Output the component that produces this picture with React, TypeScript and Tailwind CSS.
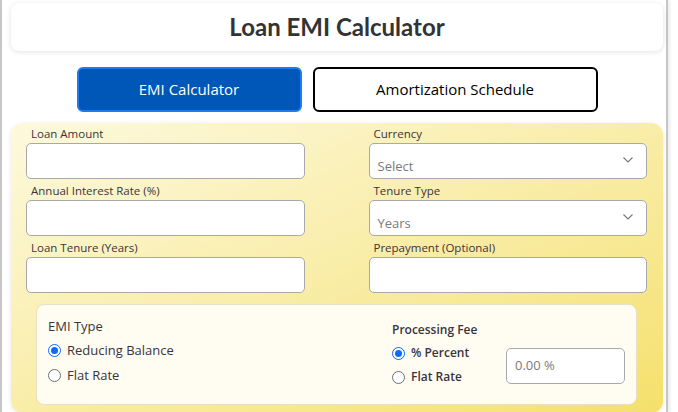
import React, { useState } from 'react';

const body = { fontFamily: '"Open Sans", "Noto Sans", Arial, sans-serif' };

function Field({ label, select, placeholder }: { label: string; select?: boolean; placeholder?: string }) {
  return (
    <div className="flex flex-col">
      <label className="pl-[5px] text-[11.5px] leading-[14px] text-[#3a3340] mb-[2px]">{label}</label>
      {select ? (
        <div className="relative h-[36px] rounded-[5px] border border-[#a9a9a9] bg-white">
          <span className="absolute left-[8px] top-[14px] text-[13px] leading-[16px] text-[#7a7a7a]">{placeholder}</span>
          <svg className="absolute right-[12px] top-[12px]" width="12" height="8" viewBox="0 0 12 8" fill="none">
            <path d="M1.5 1.5 L6 6 L10.5 1.5" stroke="#777" strokeWidth="1.1" />
          </svg>
        </div>
      ) : (
        <input className="h-[36px] rounded-[5px] border border-[#a9a9a9] bg-white px-2 outline-none" />
      )}
    </div>
  );
}

function Radio({ checked, label, bold }: { checked?: boolean; label: string; bold?: boolean }) {
  return (
    <div className="flex items-center gap-[6px] whitespace-nowrap">
      {checked ? (
        <span className="flex h-[13px] w-[13px] items-center justify-center rounded-full border-[1.5px] border-[#0b6cf5] bg-white">
          <span className="h-[7px] w-[7px] rounded-full bg-[#0b6cf5]" />
        </span>
      ) : (
        <span className="h-[13px] w-[13px] rounded-full border border-[#6f6f6f] bg-white" />
      )}
      <span className={bold ? 'text-[12px] font-semibold text-[#3a3340]' : 'text-[13px] text-[#3a3340]'}>{label}</span>
    </div>
  );
}

export default function App() {
  const [tab, setTab] = useState('emi');

  return (
    <div className="h-[412px] w-[678px] overflow-hidden bg-white" style={body}>
      <div className="h-full w-[668px] border-x-2 border-[#c6c6c6] shadow-[2px_0_3px_rgba(0,0,0,0.08)]">
        <div className="ml-[9px] mr-[3px] pt-[3px]">
          <div className="flex h-[48px] items-center justify-center rounded-[8px] bg-white shadow-[0_1px_5px_rgba(0,0,0,0.12)]">
            <h1 className="text-[24px] font-bold text-[#333]" style={{ fontFamily: 'Lato, sans-serif' }}>
              Loan EMI Calculator
            </h1>
          </div>

          <div className="mt-[16px] flex justify-center gap-[11px]">
            <button
              onClick={() => setTab('emi')}
              className="h-[45px] w-[225px] rounded-[6px] border-2 border-[#1f7cf0] bg-[#0057b7] text-[15px] text-white"
            >
              EMI Calculator
            </button>
            <button
              onClick={() => setTab('amort')}
              className="h-[45px] w-[285px] rounded-[6px] border-2 border-black bg-white text-[15px] text-black"
            >
              Amortization Schedule
            </button>
          </div>

          <div className="mt-[11px] rounded-[12px] bg-gradient-to-br from-[#fdf9dd] to-[#f5e06a] pl-[15px] pr-[16px] pt-[4px] pb-[8px] shadow-[0_1px_4px_rgba(0,0,0,0.1)]">
            <div className="grid grid-cols-2 gap-x-[64px] gap-y-[5px]">
              <Field label="Loan Amount" />
              <Field label="Currency" select placeholder="Select" />
              <Field label="Annual Interest Rate (%)" />
              <Field label="Tenure Type" select placeholder="Years" />
              <Field label="Loan Tenure (Years)" />
              <Field label="Prepayment (Optional)" />
            </div>

            <div className="mx-[10px] mt-[11px] flex h-[101px] justify-between rounded-[8px] border border-[#e6e1c4] bg-[#fffdf1] px-[11px] pt-[12px]">
              <div className="flex flex-col">
                <div className="text-[13px] leading-[18px] text-[#3a3340]">EMI Type</div>
                <div className="mt-[6px] flex flex-col gap-[5px]">
                  <Radio checked label="Reducing Balance" />
                  <Radio label="Flat Rate" />
                </div>
              </div>
              <div className="flex gap-[30px]">
                <div className="flex w-[84px] flex-col pt-[4px]">
                  <div className="whitespace-nowrap text-[12px] font-semibold leading-[18px] text-[#3a3340]">Processing Fee</div>
                  <div className="mt-[5px] flex flex-col gap-[6px]">
                    <Radio checked bold label="% Percent" />
                    <Radio bold label="Flat Rate" />
                  </div>
                </div>
                <div className="pt-[31px]">
                  <div className="flex h-[36px] w-[119px] items-center rounded-[5px] border border-[#a9a9a9] bg-white px-[8px] text-[13px] text-[#7a7a7a]">
                    0.00 %
                  </div>
                </div>
              </div>
            </div>
          </div>
        </div>
      </div>
      <span className="hidden">{tab}</span>
    </div>
  );
}
